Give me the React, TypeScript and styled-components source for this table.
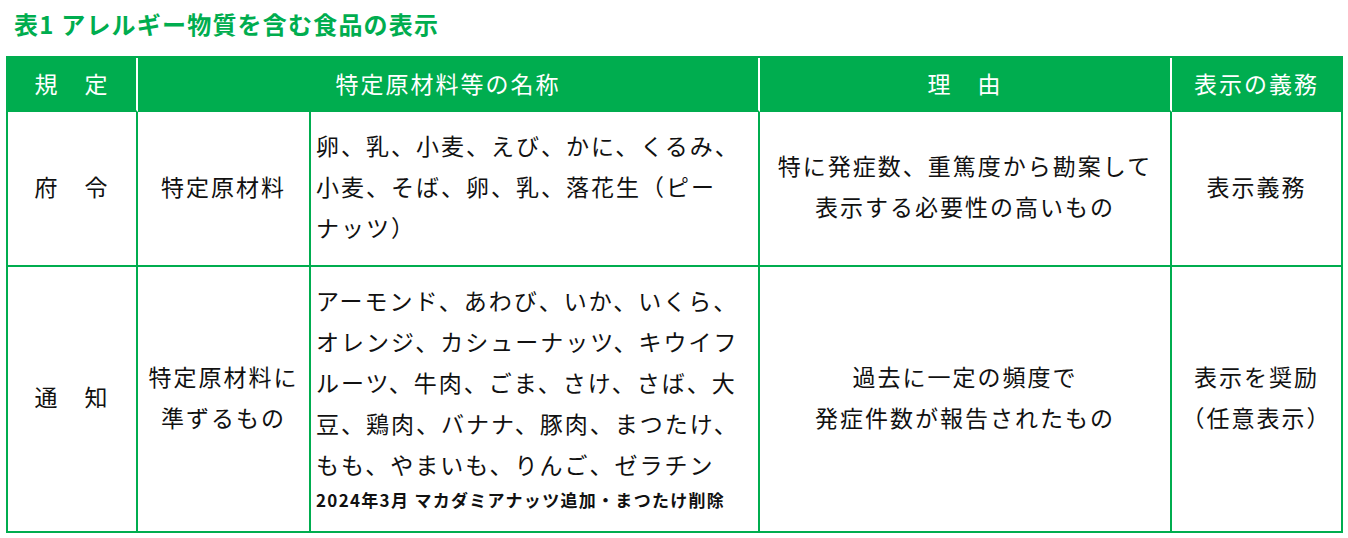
import styled, { createGlobalStyle } from "styled-components";

const GREEN = "#00ad4f";

const GlobalStyle = createGlobalStyle`
  body {
    margin: 0;
    background: #fff;
    font-family: "Noto Sans CJK JP", "Noto Sans", sans-serif;
  }
`;

const Page = styled.div`
  padding: 8px 6px 0;
`;

const Title = styled.h2`
  margin: 0 0 16px 8px;
  font-size: 24px;
  line-height: 32px;
  font-weight: 700;
  letter-spacing: 1.2px;
  color: ${GREEN};
`;

const Table = styled.table`
  table-layout: fixed;
  width: 1337px;
  border-collapse: separate;
  border-spacing: 0;
  border-left: 2px solid ${GREEN};
  border-top: 2px solid ${GREEN};
`;

const HeadRow = styled.tr`
  height: 54px;
`;

const Row = styled.tr<{ $h: number }>`
  height: ${(p) => p.$h}px;
`;

const HeadCell = styled.th<{ $last?: boolean }>`
  background: ${GREEN};
  color: #fff;
  font-weight: 400;
  font-size: 23px;
  letter-spacing: 2px;
  line-height: 30px;
  text-align: center;
  padding: 0 0 2px;
  border-right: 2px solid ${(p) => (p.$last ? GREEN : "#fff")};
  border-bottom: 2px solid ${GREEN};
`;

const Cell = styled.td<{ $left?: boolean }>`
  color: #111;
  font-size: 23px;
  letter-spacing: 2px;
  line-height: 41px;
  text-align: ${(p) => (p.$left ? "left" : "center")};
  vertical-align: middle;
  padding: ${(p) => (p.$left ? "0 2px 5px 5px" : "0 0 5px")};
  border-right: 2px solid ${GREEN};
  border-bottom: 2px solid ${GREEN};
  white-space: nowrap;
`;

const Note = styled.div`
  font-size: 17px;
  font-weight: 700;
  letter-spacing: 1.3px;
  line-height: 28px;
  margin-top: 1px;
`;

const widths = [130, 173, 449, 412, 171];

export default function App() {
  return (
    <Page>
      <GlobalStyle />
      <Title>表1 アレルギー物質を含む食品の表示</Title>
      <Table>
        <colgroup>
          {widths.map((w, i) => (
            <col key={i} style={{ width: w }} />
          ))}
        </colgroup>
        <thead>
          <HeadRow>
            <HeadCell>規　定</HeadCell>
            <HeadCell colSpan={2}>特定原材料等の名称</HeadCell>
            <HeadCell>理　由</HeadCell>
            <HeadCell $last>表示の義務</HeadCell>
          </HeadRow>
        </thead>
        <tbody>
          <Row $h={155}>
            <Cell>府　令</Cell>
            <Cell>特定原材料</Cell>
            <Cell $left>
              卵、乳、小麦、えび、かに、くるみ、
              <br />
              小麦、そば、卵、乳、落花生（ピー
              <br />
              ナッツ）
            </Cell>
            <Cell>
              特に発症数、重篤度から勘案して
              <br />
              表示する必要性の高いもの
            </Cell>
            <Cell>表示義務</Cell>
          </Row>
          <Row $h={266}>
            <Cell>通　知</Cell>
            <Cell>
              特定原材料に
              <br />
              準ずるもの
            </Cell>
            <Cell $left>
              アーモンド、あわび、いか、いくら、
              <br />
              オレンジ、カシューナッツ、キウイフ
              <br />
              ルーツ、牛肉、ごま、さけ、さば、大
              <br />
              豆、鶏肉、バナナ、豚肉、まつたけ、
              <br />
              もも、やまいも、りんご、ゼラチン
              <Note>2024年3月 マカダミアナッツ追加・まつたけ削除</Note>
            </Cell>
            <Cell>
              過去に一定の頻度で
              <br />
              発症件数が報告されたもの
            </Cell>
            <Cell>
              表示を奨励
              <br />
              （任意表示）
            </Cell>
          </Row>
        </tbody>
      </Table>
    </Page>
  );
}
